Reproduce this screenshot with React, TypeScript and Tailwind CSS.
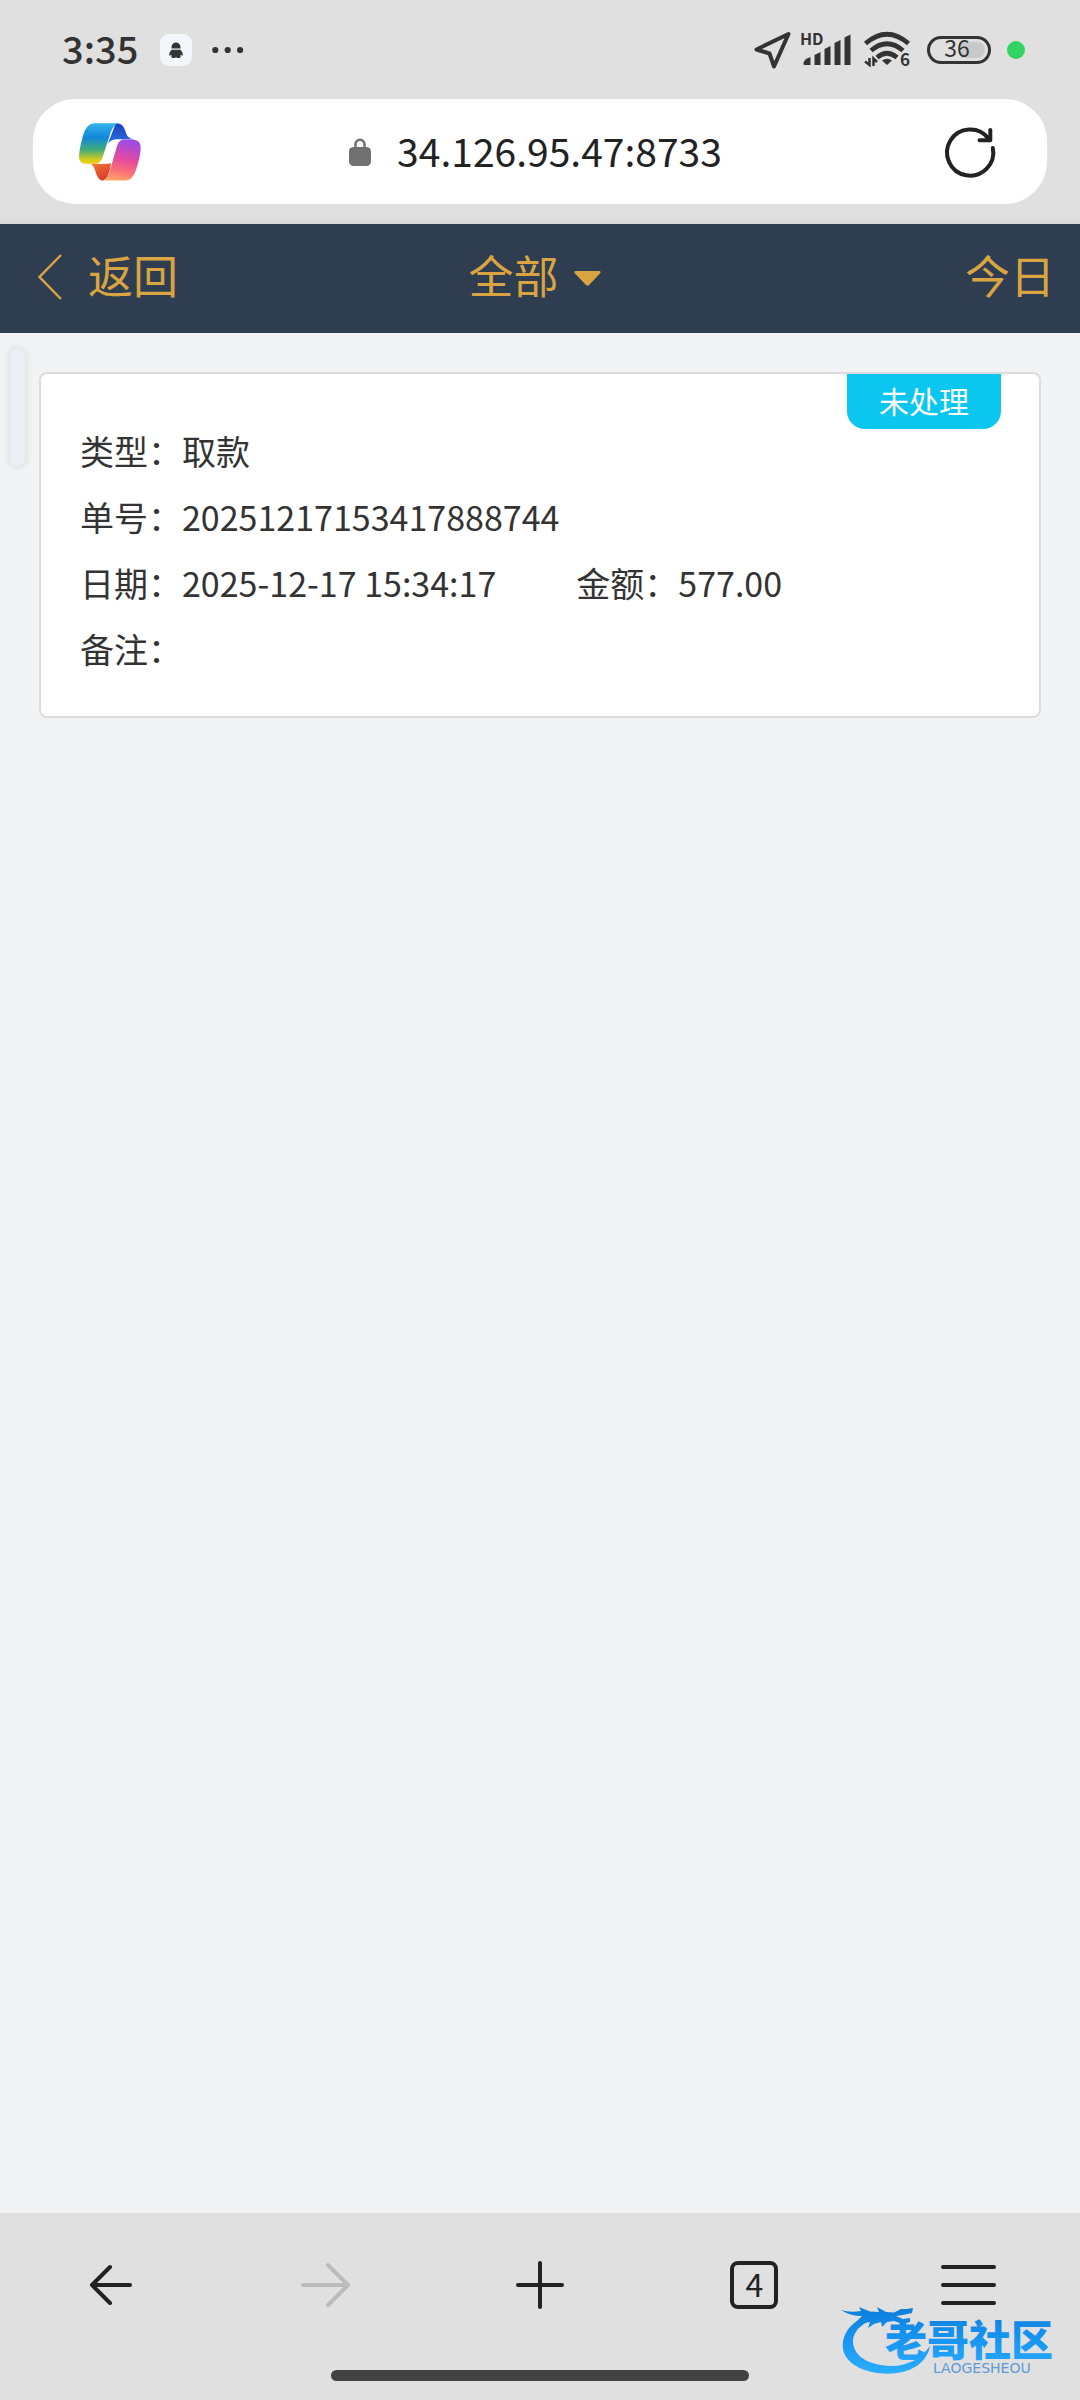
interface RecordItem {
  type: string;
  orderNo: string;
  date: string;
  amount: string;
  remark: string;
  status: string;
}

const records: RecordItem[] = [
  {
    type: '取款',
    orderNo: '20251217153417888744',
    date: '2025-12-17 15:34:17',
    amount: '577.00',
    remark: '',
    status: '未处理',
  },
];

function StatusBar() {
  return (
    <div className="flex h-[99px] items-center justify-between pr-[55px] pl-[62px] text-[#333]">
      <div className="flex items-center">
        <span className="pb-1 text-[38px] leading-none font-medium">3:35</span>
        <svg className="ml-[22px]" width="32" height="32" viewBox="0 0 32 32" aria-hidden="true">
          <rect width="32" height="32" rx="9" fill="#f3f6fb" />
          <path d="M11.5 14.5C11 6.5 21 6.5 20.5 14.5Z" fill="#333" />
          <path
            d="M11.5 15.8H20.5Q23 18.5 22.8 21.5Q22 22 20.6 20.5V22.8L20 24H17L16 23L15 24H12L11.4 22.8V20.5Q10 22 9.2 21.5Q9 18.5 11.5 15.8Z"
            fill="#333"
          />
        </svg>
        <svg className="ml-5" width="32" height="8" viewBox="0 0 32 8" fill="#333" aria-hidden="true">
          <circle cx="3.3" cy="4" r="3.1" />
          <circle cx="15.7" cy="4" r="3.1" />
          <circle cx="28.1" cy="4" r="3.1" />
        </svg>
      </div>

      <div className="flex items-center gap-3">
        <svg className="overflow-visible" width="37" height="38" viewBox="-2 0 37 38" fill="none" aria-hidden="true">
          <path d="M2.5 18.5L34.5 3L20 35.5L15.5 22.5Z" stroke="#333" strokeWidth="4" strokeLinejoin="round" />
        </svg>
        <svg className="overflow-visible" width="50" height="44" viewBox="0 -4 50 44" fill="#333" aria-hidden="true">
          <text x="-1" y="13" fontSize="16" fontWeight="700">HD</text>
          <path d="M2.5 31Q3 27 9.500 25V33H3.500Q2.500 33 2.500 32Z" />
          <path d="M13.500 23L19.500 20V33H13.500Z" />
          <path d="M23.500 17L29.500 14V33H23.500Z" />
          <path d="M33.500 11L39.500 8V33H33.500Z" />
          <path d="M43.500 5.500L49.500 2.500V33H43.500Z" />
        </svg>
        <svg className="overflow-visible" width="52" height="44" viewBox="0 -3 52 44" fill="none" aria-hidden="true">
          <g stroke="#333" strokeWidth="4.8">
            <path d="M2.500 12.500Q24 -6 45.500 12.500" />
            <path d="M8 19.500Q24 6 40 19.500" />
            <path d="M14 26.500Q24 18 34 26.500" />
          </g>
          <path d="M19 29.500Q24 26 29 29.500L24 34Z" fill="#333" />
          <path d="M6.500 27V34L2 30.500M10.500 35V27.500L14 31" stroke="#333" strokeWidth="2.5" />
          <text x="37" y="35" fontSize="17" fontWeight="700" fill="#333">6</text>
        </svg>
        <div className="relative flex h-7 w-16 items-center justify-center rounded-full border-[3px] border-[#333]">
          <span className="absolute inset-y-[3px] right-[3px] w-6 rounded-r-full bg-[#c9c9c9]" />
          <span className="relative pr-1 pb-1 text-[23px] leading-none">36</span>
        </div>
        <span className="ml-1 size-[18px] rounded-full bg-[#31d361]" />
      </div>
    </div>
  );
}

function CopilotLogo() {
  return (
    <svg width="62" height="58" viewBox="0 0 182 169" aria-hidden="true">
      <defs>
        <linearGradient id="ribbonLeft" x1="0" y1="0" x2="0" y2="1">
          <stop offset="0" stopColor="#35b4ea" />
          <stop offset="0.35" stopColor="#1088dc" />
          <stop offset="0.65" stopColor="#42ab7c" />
          <stop offset="0.9" stopColor="#d3cd1d" />
          <stop offset="1" stopColor="#f0cc10" />
        </linearGradient>
        <linearGradient id="ribbonRight" x1="0.3" y1="0" x2="0.1" y2="1">
          <stop offset="0" stopColor="#a24be0" />
          <stop offset="0.4" stopColor="#e3499f" />
          <stop offset="0.7" stopColor="#fb6f78" />
          <stop offset="1" stopColor="#ffb066" />
        </linearGradient>
        <linearGradient id="foldTop" x1="0.4" y1="0" x2="0.2" y2="1">
          <stop offset="0" stopColor="#1d3fb8" />
          <stop offset="1" stopColor="#2c74e8" />
        </linearGradient>
        <linearGradient id="foldBottom" x1="0" y1="0" x2="0.4" y2="1">
          <stop offset="0" stopColor="#fb8a3c" />
          <stop offset="1" stopColor="#dc3f28" />
        </linearGradient>
      </defs>
      <path d="M108 0C128 0 133 12 137 26Q142 46 160 47H108Q96 48 84 62Z" fill="url(#foldTop)" />
      <path d="M36 119H66Q84 117 96 98L92 130C86 155 80 168 70 168C56 168 51 150 47 138Q43 124 34 119Z" fill="url(#foldBottom)" />
      <path d="M45 0H118C103 3 95 18 90 36L70 98Q64 118 48 119H20Q0 119 0 98Q0 78 12 35Q22 0 45 0Z" fill="url(#ribbonLeft)" />
      <path d="M128 48H158Q181 49 181 72Q181 95 168 135Q158 168 136 168H68C82 165 88 150 93 131L109 76Q115 50 128 48Z" fill="url(#ribbonRight)" />
      <path d="M108 49H126Q114 52 109 70L97 114Q92 119 85 119H56Q66 116 71 100L84 62Q90 49 108 49Z" fill="#fff" />
    </svg>
  );
}

function AddressBar() {
  return (
    <div className="mx-[33px] mb-5 flex h-[105px] items-center justify-between rounded-[42px] bg-white pr-[45px] pl-[46px]">
      <button type="button" aria-label="Copilot">
        <CopilotLogo />
      </button>
      <div className="flex items-center gap-[26px] pr-2">
        <svg width="22" height="28" viewBox="0 0 22 28" aria-hidden="true">
          <path d="M6.500 10V6.500A4.500 4.800 0 0 1 15.500 6.500V10" fill="none" stroke="#717171" strokeWidth="2.5" />
          <rect y="9" width="22" height="19" rx="4.500" fill="#717171" />
        </svg>
        <input
          type="text"
          aria-label="地址"
          defaultValue="34.126.95.47:8733"
          className="field-sizing-content bg-transparent pb-1 text-[39px] leading-[46px] text-[#222] outline-none"
        />
      </div>
      <button type="button" aria-label="刷新">
        <svg width="64" height="64" viewBox="0 0 64 64" fill="none" stroke="#222" strokeWidth="4" strokeLinecap="round" aria-hidden="true">
          <path d="M54.8 28A23.100 23.100 0 1 1 50.500 18.500" />
          <path d="M52.300 10V20.300H41.500" strokeLinejoin="round" />
        </svg>
      </button>
    </div>
  );
}

function PageHeader() {
  return (
    <header className="relative grid h-[109px] grid-cols-[1fr_auto_1fr] items-center bg-[#2e3e50] pr-[25px] pb-1 pl-[38px] text-[45px] leading-[60px] text-[#d9a441] shadow-[0_2px_8px_rgba(60,70,110,0.25)]">
      <button type="button" className="flex items-center gap-[26px] justify-self-start">
        <svg width="24" height="46" viewBox="0 0 24 46" fill="none" stroke="currentColor" strokeWidth="2.5" aria-hidden="true">
          <path d="M23 1L1.500 23L23 45" />
        </svg>
        <span className="pb-1">返回</span>
      </button>
      <label className="flex items-center gap-3.5 pr-6">
        <select aria-label="类型筛选" className="appearance-none bg-transparent pb-1 outline-none">
          <option>全部</option>
        </select>
        <svg className="mt-1" width="27" height="15" viewBox="0 0 27 15" aria-hidden="true">
          <path d="M1.500 0H25.500Q27.500 0.500 26 2.500L15 14Q13.500 15.500 12 14L1 2.500Q-0.500 0.500 1.500 0Z" fill="currentColor" />
        </svg>
      </label>
      <button type="button" className="justify-self-end pb-1">今日</button>
    </header>
  );
}

function RecordCard({ record }: { record: RecordItem }) {
  return (
    <article className="relative rounded-lg border-2 border-[#dcdcde] bg-white px-[39px] pt-11 pb-[34px] text-[34px] leading-[66px] text-[#333]">
      <span className="absolute top-0 right-[38px] h-[55px] rounded-b-[18px] bg-[#0bc6ee] px-8 text-[30px] leading-[52px] text-white">
        {record.status}
      </span>
      <p>类型：{record.type}</p>
      <p>单号：{record.orderNo}</p>
      <div className="flex gap-20">
        <p>日期：{record.date}</p>
        <p>金额：{record.amount}</p>
      </div>
      <p>备注：{record.remark}</p>
    </article>
  );
}

function BrowserNav() {
  return (
    <nav className="grid h-36 grid-cols-5 place-items-center px-1 text-[#222]">
      <button type="button" aria-label="后退">
        <svg width="44" height="44" viewBox="0 0 44 44" fill="none" stroke="currentColor" strokeWidth="4" strokeLinecap="round" strokeLinejoin="round">
          <path d="M41 22H3M21 4L3 22L21 40" />
        </svg>
      </button>
      <button type="button" aria-label="前进" disabled className="text-[#bbb]">
        <svg width="50" height="50" viewBox="0 0 50 50" fill="none" stroke="currentColor" strokeWidth="4" strokeLinecap="round" strokeLinejoin="round">
          <path d="M2 25H47M27 5L47 25L27 45" />
        </svg>
      </button>
      <button type="button" aria-label="新建标签页">
        <svg width="48" height="48" viewBox="0 0 48 48" fill="none" stroke="currentColor" strokeWidth="4" strokeLinecap="round">
          <path d="M24 2V46M2 24H46" />
        </svg>
      </button>
      <button type="button" aria-label="标签页" className="size-12 rounded-lg border-4 border-[#222] pb-1 text-[32px] leading-[36px]">
        4
      </button>
      <button type="button" aria-label="菜单">
        <svg width="56" height="40" viewBox="0 0 56 40" fill="none" stroke="currentColor" strokeWidth="4" strokeLinecap="round">
          <path d="M2 2H53M2 20H53M2 38H53" />
        </svg>
      </button>
    </nav>
  );
}

function Watermark() {
  return (
    <svg
      className="pointer-events-none absolute right-[17px] bottom-6"
      width="222"
      height="72"
      viewBox="0 0 222 72"
      role="img"
      aria-label="老哥社区"
    >
      <defs>
        <linearGradient id="markFill" gradientUnits="userSpaceOnUse" x1="0" y1="0" x2="0" y2="72">
          <stop offset="0" stopColor="#0b7bd8" />
          <stop offset="0.4" stopColor="#1590ee" />
          <stop offset="1" stopColor="#2bb0ff" />
        </linearGradient>
      </defs>
      <g fill="url(#markFill)">
        <path d="M38 9C12 13 0 29 2 45C5 62 28 71 52 69.500C72 68 86 58 89 42C80 55 66 62 50 62C28 61 13 53 12 38C12 27 22 16 42 14Z" />
        <path d="M0 6Q9 9 20 7L18 3L29 7.500L38 8L36 3L45 8L53 8.500L60 5H66L72 4L71 9L62 11L55 12L62 15L69 14V18L62 20L53 17L46 18L41 23L40 18L33 20L27 24L29 18L22 19L15 18L21 12Q9 12 0 6Z" />
        <text x="44" y="52" fontSize="42" fontWeight="900">老哥社区</text>
      </g>
      <text x="92" y="69" fontSize="14" fill="#5c9bd6" className="font-['DejaVu_Sans',sans-serif]">LAOGESHEOU</text>
    </svg>
  );
}

export default function App() {
  return (
    <div className="flex min-h-screen flex-col bg-[#e0e0e0] font-['Noto_Sans_CJK_SC',sans-serif]">
      <StatusBar />
      <AddressBar />
      <PageHeader />
      <main className="relative flex-1 bg-[#f2f3f5] px-[39px] py-[39px]">
        <span className="absolute top-4 left-2.5 h-[117px] w-[15px] rounded-full bg-[#edeff6] shadow-[0_0_5px_3px_rgba(0,0,0,0.06)]" />
        {records.map((record) => (
          <RecordCard key={record.orderNo} record={record} />
        ))}
      </main>
      <footer className="relative pb-[19px]">
        <BrowserNav />
        <div className="mx-auto mt-[13px] h-[11px] w-[418px] rounded-full bg-[#424242]" />
        <Watermark />
      </footer>
    </div>
  );
}
